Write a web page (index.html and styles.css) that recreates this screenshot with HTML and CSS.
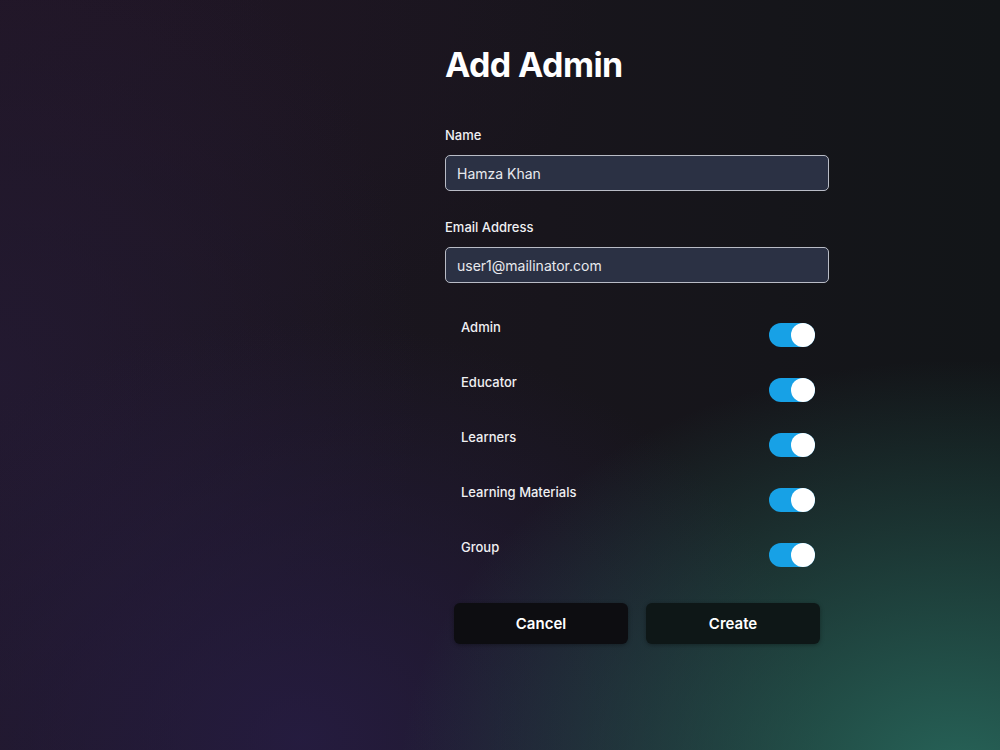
FILE: index.html
```html
<!DOCTYPE html>
<html lang="en">
<head>
  <meta charset="UTF-8">
  <meta name="viewport" content="width=device-width, initial-scale=1.0">
  <title>Add Admin</title>
  <link rel="stylesheet" href="styles.css">
</head>
<body>

  <main class="page">
    <form class="admin-form" id="addAdminForm">
      <h1>Add Admin</h1>

      <div class="field">
        <label for="name">Name</label>
        <input type="text" id="name" value="Hamza Khan">
      </div>

      <div class="field">
        <label for="email">Email Address</label>
        <input type="email" id="email" value="user1@mailinator.com">
      </div>

      <div class="permissions">
        <div class="perm-row">
          <span>Admin</span>
          <label class="switch"><input type="checkbox" checked><span class="slider"></span></label>
        </div>
        <div class="perm-row">
          <span>Educator</span>
          <label class="switch"><input type="checkbox" checked><span class="slider"></span></label>
        </div>
        <div class="perm-row">
          <span>Learners</span>
          <label class="switch"><input type="checkbox" checked><span class="slider"></span></label>
        </div>
        <div class="perm-row">
          <span>Learning Materials</span>
          <label class="switch"><input type="checkbox" checked><span class="slider"></span></label>
        </div>
        <div class="perm-row">
          <span>Group</span>
          <label class="switch"><input type="checkbox" checked><span class="slider"></span></label>
        </div>
      </div>

      <div class="actions">
        <button type="button" class="btn btn-cancel">Cancel</button>
        <button type="button" class="btn btn-create">Create</button>
      </div>
    </form>
  </main>

</body>
</html>
```

FILE: styles.css
```css
html, body {
  height: 100%;
}

body {
  font-family: 'Inter', 'Liberation Sans', sans-serif;
  margin: 0;
  padding: 0;
  color: #fff;
  background-color: #16141a;
  background-image:
    radial-gradient(ellipse 560px 420px at 960px 780px, rgba(40, 104, 92, 0.95), rgba(40, 104, 92, 0) 100%),
    radial-gradient(ellipse 520px 420px at 300px 740px, rgba(38, 28, 66, 0.9), rgba(38, 28, 66, 0) 100%),
    radial-gradient(ellipse 420px 500px at 0px 380px, rgba(36, 26, 52, 0.8), rgba(36, 26, 52, 0) 100%),
    radial-gradient(ellipse 600px 400px at 0px 0px, rgba(33, 22, 38, 0.9), rgba(33, 22, 38, 0) 100%),
    linear-gradient(90deg, #1d1622 0%, #18151c 55%, #121518 100%);
}

.page {
  display: flex;
  justify-content: flex-start;
  padding-left: 445px;
  padding-top: 44px;
}

.admin-form {
  width: 384px;
}

h1 {
  margin: 0 0 41px;
  font-size: 34px;
  font-weight: 700;
  letter-spacing: -0.6px;
  line-height: 42px;
}

.field {
  margin-bottom: 28px;
}

.field label {
  display: block;
  font-size: 13px;
  font-weight: 500;
  color: #f0f0f3;
  margin-bottom: 12px;
  line-height: 16px;
}

.field input {
  width: 100%;
  height: 36px;
  box-sizing: border-box;
  padding: 0 11px;
  border: 1px solid #b9bcc6;
  border-radius: 5px;
  background-color: #2b3144;
  color: #e8e9ee;
  font-family: inherit;
  font-size: 14px;
  outline: none;
}

.permissions {
  padding: 8px 14px 0 16px;
}

.perm-row {
  display: flex;
  justify-content: space-between;
  align-items: flex-start;
  height: 55px;
}

.perm-row span {
  font-size: 13px;
  font-weight: 500;
  color: #f0f0f3;
  line-height: 16px;
}

.switch {
  position: relative;
  display: inline-block;
  width: 46px;
  height: 24px;
  margin-top: 4px;
}

.switch input {
  opacity: 0;
  width: 0;
  height: 0;
}

.slider {
  position: absolute;
  inset: 0;
  background-color: #555;
  border-radius: 12px;
  cursor: pointer;
}

.slider::before {
  content: "";
  position: absolute;
  width: 24px;
  height: 24px;
  top: 0;
  left: 0;
  border-radius: 50%;
  background-color: #fff;
}

.switch input:checked + .slider {
  background-color: #17a1e6;
}

.switch input:checked + .slider::before {
  left: 22px;
}

.actions {
  display: flex;
  gap: 18px;
  padding: 0 9px;
  margin-top: 9px;
}

.btn {
  flex: 1;
  height: 41px;
  border: none;
  border-radius: 6px;
  color: #fff;
  font-family: inherit;
  font-size: 15px;
  font-weight: 600;
  cursor: pointer;
  box-shadow: 0 1px 4px rgba(0, 0, 0, 0.35);
}

.btn-cancel {
  background-color: #0d0d11;
}

.btn-create {
  background-color: #0e1717;
}
```
